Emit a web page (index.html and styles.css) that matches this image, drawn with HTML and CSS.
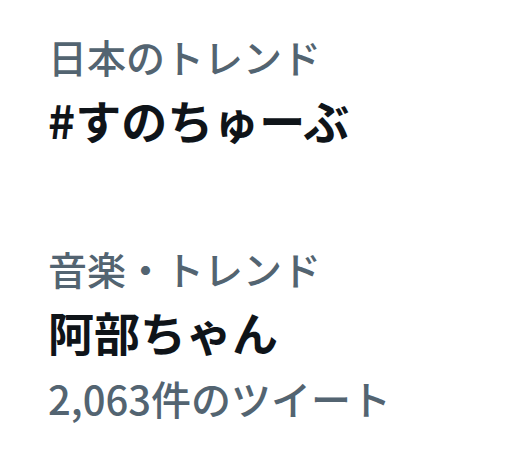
FILE: index.html
```html
<!DOCTYPE html>
<html lang="ja">
<head>
    <meta charset="UTF-8">
    <meta name="viewport" content="width=device-width, initial-scale=1.0">
    <title>トレンド</title>
    <link rel="stylesheet" href="styles.css">
</head>
<body>
    <div class="trends">
        <div class="trend">
            <div class="trend-meta">日本のトレンド</div>
            <div class="trend-name">#すのちゅーぶ</div>
        </div>
        <div class="trend">
            <div class="trend-meta">音楽・トレンド</div>
            <div class="trend-name">阿部ちゃん</div>
            <div class="trend-count">2,063件のツイート</div>
        </div>
    </div>
</body>
</html>
```

FILE: styles.css
```css
body {
    margin: 0;
    background: #fff;
    font-family: "Noto Sans CJK JP", "Noto Sans", sans-serif;
}

.trends {
    display: flex;
    flex-direction: column;
    gap: 86px;
    padding: 25px 0 0 48px;
}

.trend-meta,
.trend-count {
    color: #536471;
    font-size: 39px;
    font-weight: 500;
    line-height: 63px;
}

.trend-count {
    font-size: 40px;
    margin-top: 4px;
}

.trend-name {
    color: #0f1419;
    font-size: 46px;
    font-weight: 600;
    line-height: 63px;
}
```
